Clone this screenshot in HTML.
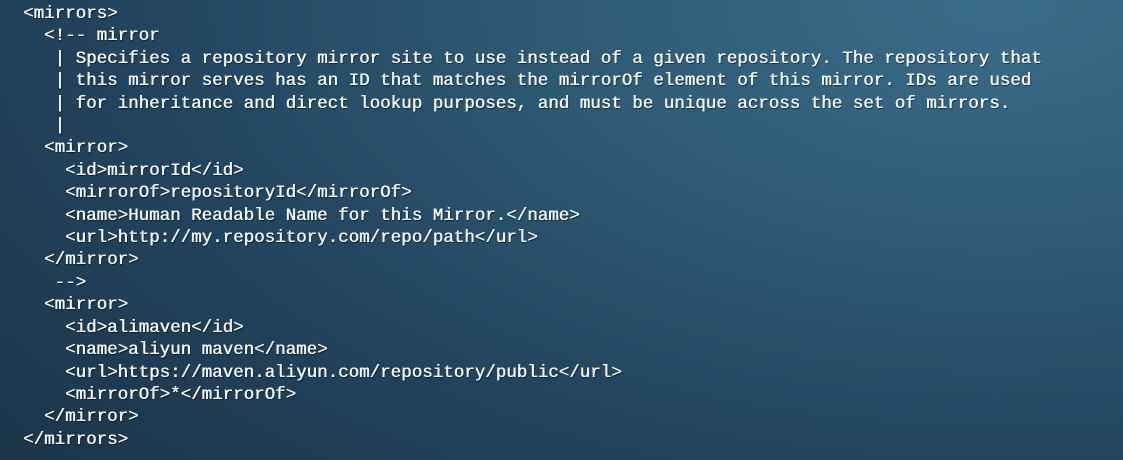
<!DOCTYPE html>
<html><head><meta charset="utf-8"><style>
html,body{margin:0;padding:0;}
body{width:1123px;height:460px;overflow:hidden;
background:radial-gradient(ellipse 1300px 700px at 1000px 0px,#3a6d8a 0%,#2e5a74 35%,#234560 65%,#1c3549 100%);}
pre{position:absolute;left:23px;top:3px;margin:0;font-family:"Liberation Mono",monospace;font-size:17.5px;line-height:22.4px;color:#f4f6f8;text-shadow:0.5px 0 0 #f4f6f8,1px 1px 1px rgba(0,0,0,.6);}
</style></head><body><pre>&lt;mirrors&gt;
  &lt;!-- mirror
   | Specifies a repository mirror site to use instead of a given repository. The repository that
   | this mirror serves has an ID that matches the mirrorOf element of this mirror. IDs are used
   | for inheritance and direct lookup purposes, and must be unique across the set of mirrors.
   |
  &lt;mirror&gt;
    &lt;id&gt;mirrorId&lt;/id&gt;
    &lt;mirrorOf&gt;repositoryId&lt;/mirrorOf&gt;
    &lt;name&gt;Human Readable Name for this Mirror.&lt;/name&gt;
    &lt;url&gt;http://my.repository.com/repo/path&lt;/url&gt;
  &lt;/mirror&gt;
   --&gt;
  &lt;mirror&gt;
    &lt;id&gt;alimaven&lt;/id&gt;
    &lt;name&gt;aliyun maven&lt;/name&gt;
    &lt;url&gt;https://maven.aliyun.com/repository/public&lt;/url&gt;
    &lt;mirrorOf&gt;*&lt;/mirrorOf&gt;
  &lt;/mirror&gt;
&lt;/mirrors&gt;</pre></body></html>
